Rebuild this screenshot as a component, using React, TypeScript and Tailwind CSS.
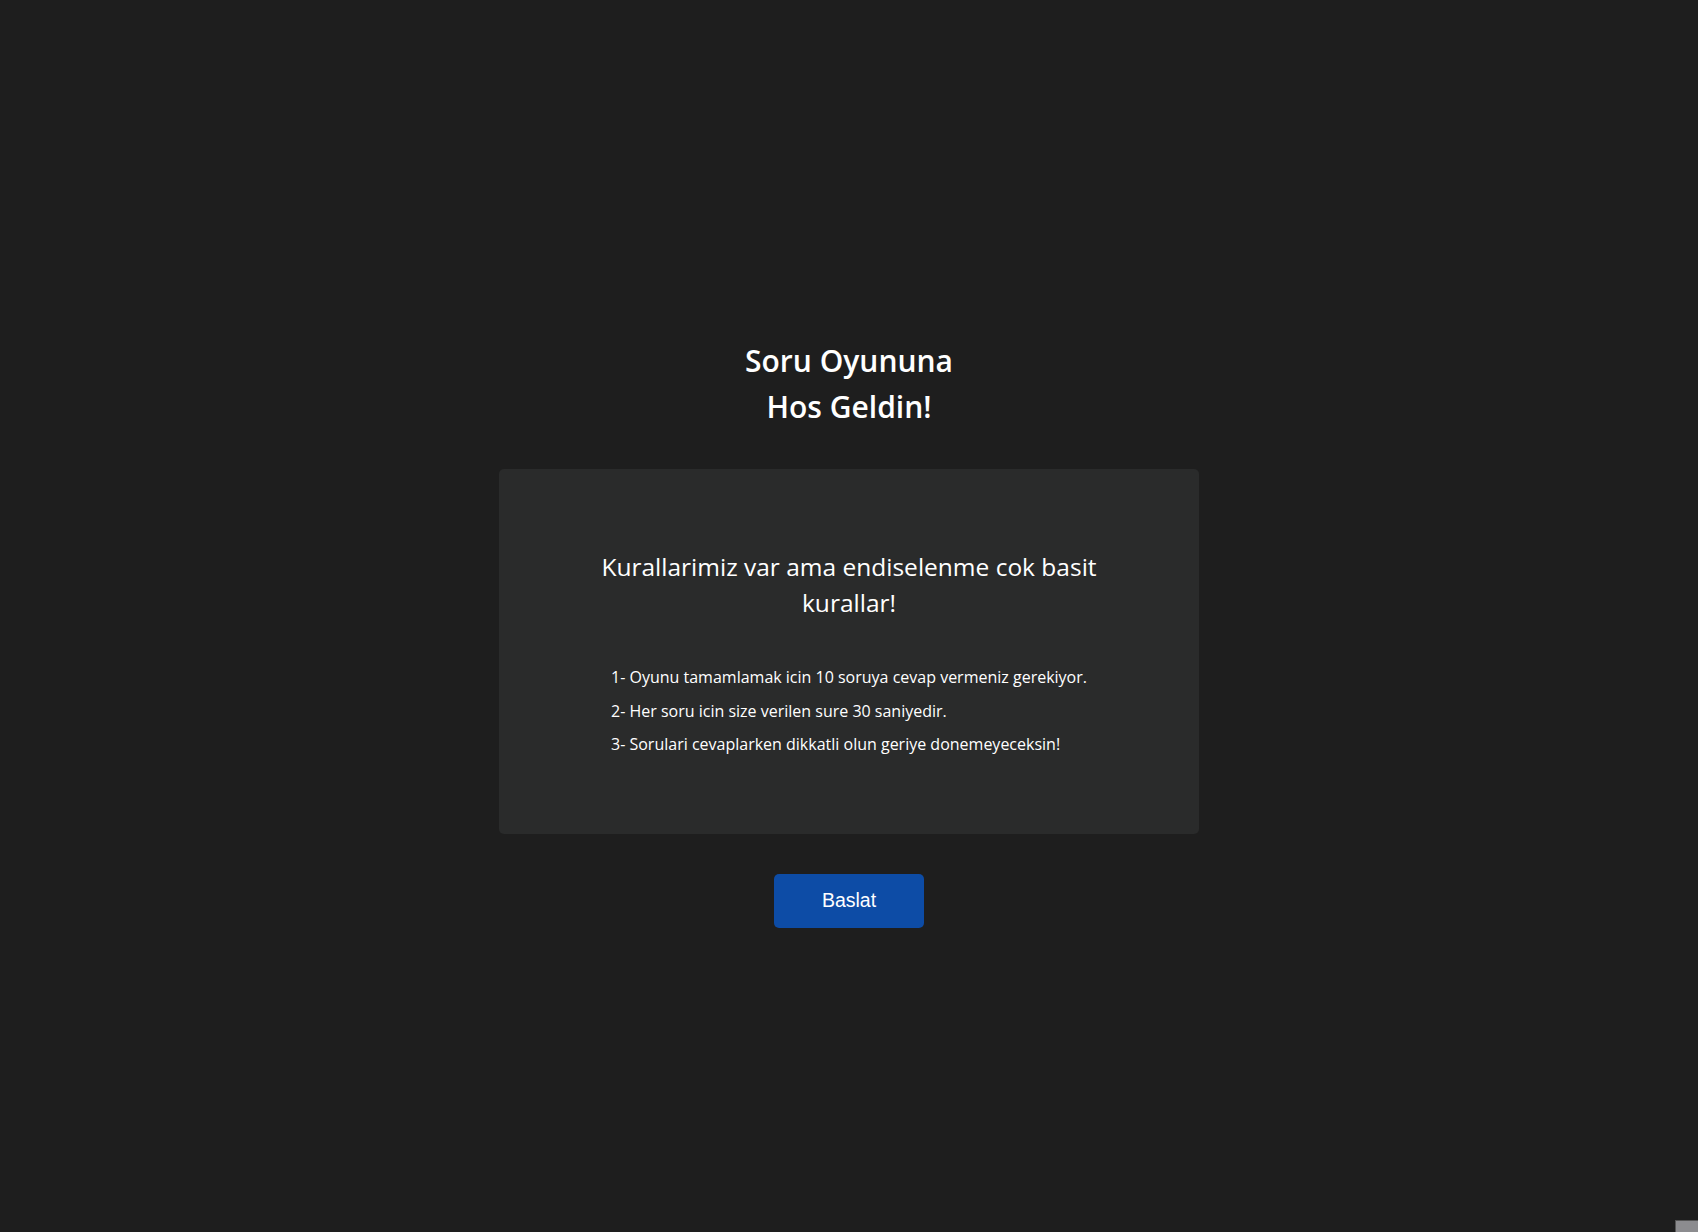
import { useState } from "react";

const rules = [
  "1- Oyunu tamamlamak icin 10 soruya cevap vermeniz gerekiyor.",
  "2- Her soru icin size verilen sure 30 saniyedir.",
  "3- Sorulari cevaplarken dikkatli olun geriye donemeyeceksin!",
];

export default function App() {
  const [started, setStarted] = useState(false);

  return (
    <div
      className="relative min-h-screen w-full bg-[#1e1e1e] text-white flex flex-col items-center pt-[338px]"
      style={{ fontFamily: '"Open Sans", "Noto Sans", sans-serif' }}
    >
      {/* Title */}
      <h1 className="text-[30px] leading-[46px] font-semibold text-center">
        Soru Oyununa
        <br />
        Hos Geldin!
      </h1>

      {/* Rules card */}
      <div className="mt-[39px] w-[700px] rounded-[5px] bg-[#2a2b2b] px-[72px] pt-[80px] pb-[78px] flex flex-col">
        <h2 className="text-[24.5px] leading-[36px] font-medium text-center">
          Kurallarimiz var ama endiselenme cok basit kurallar!
        </h2>
        <ul className="mt-[44px] mx-auto w-fit flex flex-col gap-[9.5px] text-[16px] leading-[24px]">
          {rules.map((r) => (
            <li key={r}>{r}</li>
          ))}
        </ul>
      </div>

      {/* Start button */}
      <button
        type="button"
        onClick={() => setStarted(!started)}
        className="mt-[40px] w-[150px] h-[54px] rounded-[5px] bg-[#0d4ca6] text-[19.5px] text-white"
        style={{ fontFamily: '"Liberation Sans", Arial, sans-serif' }}
      >
        Baslat
      </button>

      <div className="absolute right-0 bottom-0 w-[23px] h-[12px] bg-[#8c8c8f] border-l border-t border-[#555]" />
    </div>
  );
}
